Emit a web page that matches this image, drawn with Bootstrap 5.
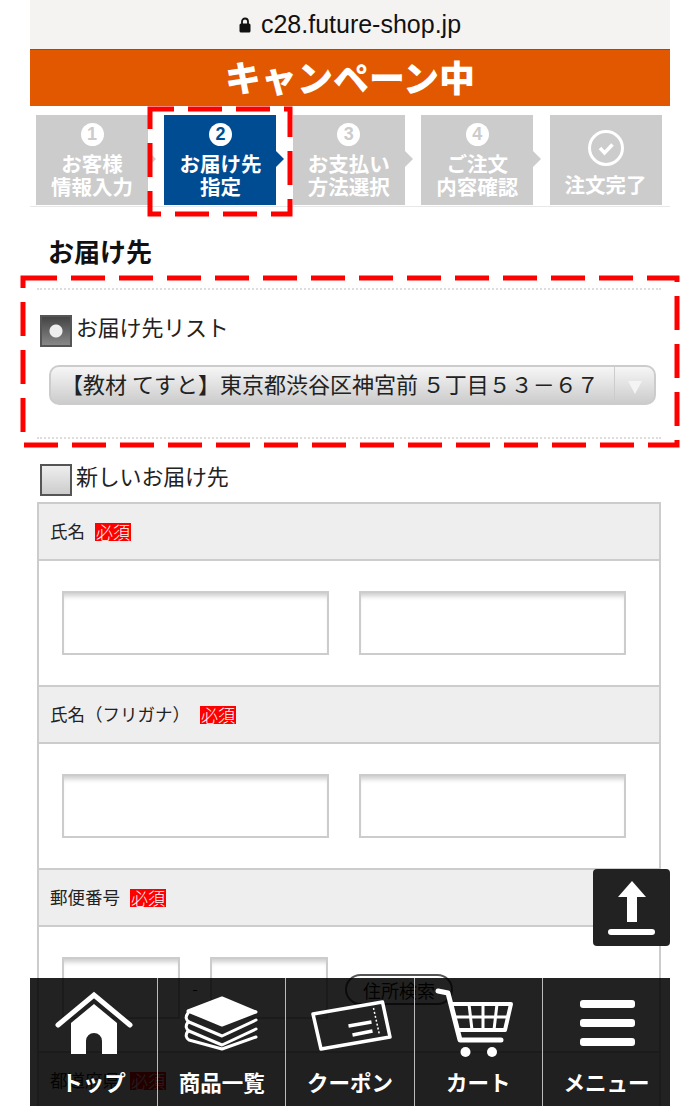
<!DOCTYPE html>
<html lang="ja">
<head>
    <meta charset="UTF-8">
    <meta name="viewport" content="width=device-width, initial-scale=1.0">
    <title>お届け先</title>
    <link rel="stylesheet" href="https://cdn.jsdelivr.net/npm/bootstrap@5.3.0/dist/css/bootstrap.min.css">
    <style>
        body {
            font-family: "Noto Sans CJK JP", "Liberation Sans", sans-serif;
            background: #fff;
            color: #222;
        }
        .shot { width: 700px; height: 1106px; overflow: hidden; position: relative; padding: 0 30px; }
        .addr-bar { height: 50px; background: #f5f3f1; border-bottom: 1px solid #a04a10; font-family: "Liberation Sans", sans-serif; font-size: 25px; color: #111; gap: 10px; }
        .camp-bar { height: 56px; background: #e25800; color: #fff; font-size: 36px; font-weight: 900; line-height: 1; padding-bottom: 4px; }
        .step-row { height: 101px; padding: 9px 0 0 6px; border-bottom: 1px solid #e8e8e8; align-items: flex-start; gap: 16.4px; }
        .step-box { width: 112px; height: 90px; background: #ccc; color: #fff; font-weight: 700; font-size: 20.5px; line-height: 23px; position: relative; padding-top: 8px; white-space: nowrap; }
        .step-box.is-current { background: #004c92; }
        .step-box.has-arrow::after { content: ""; position: absolute; left: 100%; top: 36px; border-left: 8px solid #ccc; border-top: 8px solid transparent; border-bottom: 8px solid transparent; }
        .step-box.is-current::after { border-left-color: #004c92; }
        .step-num { width: 23px; height: 23px; border-radius: 50%; background: #fff; color: #ccc; font-size: 18px; line-height: 23px; font-family: "Liberation Sans", sans-serif; margin-bottom: 6px; }
        .is-current .step-num { color: #004c92; }
        .step-done { height: 36px; margin: 7px 0 7px; }
        .page-title { font-size: 26px; font-weight: 700; line-height: 34px; padding: 27px 0 8px 18px; color: #111; margin: 0; }
        .list-block { margin: 12px 9px 0 7px; padding: 25px 2px 32px 3px; border-top: 2px dotted #ddd; border-bottom: 2px dotted #ddd; }
        .addr-radio { appearance: none; width: 32px; height: 32px; flex: none; border: 2px solid #555; background: linear-gradient(#eee, #ccc); }
        .addr-radio:checked { background: radial-gradient(circle at 50% 50%, #eee 0 6px, transparent 7px), linear-gradient(#444, #888); }
        .radio-text { font-size: 22px; line-height: 32px; color: #222; margin: -11px 0 0 4px; letter-spacing: -.2px; }
        .select-wrap { height: 40px; margin: 18px 3px 0 9px; border: 2px solid #ccc; border-radius: 10px; background: linear-gradient(#f6f6f6, #ccc); overflow: hidden; }
        .addr-select { appearance: none; border: 0; background: transparent; width: 100%; height: 100%; padding: 0 0 4px 10px; font-size: 22px; font-family: "Noto Sans CJK JP", sans-serif; color: #222; }
        .select-arrow { width: 40px; flex: none; border-left: 1px solid #ccc; }
        .select-arrow::before { content: ""; border-top: 13px solid #f4f4f4; border-left: 7px solid transparent; border-right: 7px solid transparent; margin-top: 4px; }
        .new-radio-row { margin: 25px 0 6px 10px; }
        .form-sheet { margin: 0 9px 0 7px; border: 2px solid #ccc; border-bottom: 0; }
        .sheet-head { height: 57px; background: #eee; border-bottom: 2px solid #ccc; padding-left: 11px; font-size: 17.5px; color: #222; }
        .sheet-body { height: 126px; border-bottom: 2px solid #ccc; padding: 30px 0 0 23px; gap: 30px; align-items: flex-start; }
        .req-tag { background: #f00; color: #fff; font-size: 17px; line-height: 18px; height: 18px; width: 36px; margin-left: 10px; text-align: center; white-space: nowrap; font-weight: 300; }
        .sheet-input { width: 267px; height: 64px; flex: none; border: 2px solid #ccc; border-radius: 0; box-shadow: inset 0 6px 5px -3px #ccc; }
        .sheet-input.is-short { width: 118px; height: 62px; }
        .post-dash { width: 30px; text-align: center; font-size: 16px; line-height: 62px; }
        .addr-btn { width: 108px; height: 31px; padding: 0; margin: 17px 0 0 17px; border: 2px solid #555; border-radius: 16px; background: #fff; color: #111; font-size: 18px; line-height: 26px; }
        .red-frame { position: absolute; fill: none; stroke: #f00; stroke-width: 5; stroke-dasharray: 34 14; pointer-events: none; }
        .frame-steps { left: 147px; top: 106px; stroke-dashoffset: 10; }
        .frame-list { left: 20px; top: 275px; }
        .go-top { position: absolute; left: 593px; top: 869px; width: 77px; height: 77px; background: #222; border-radius: 4px; }
        .foot-nav { position: absolute; left: 30px; top: 978px; width: 640px; height: 128px; background: rgba(0, 0, 0, .865); }
        .foot-cell { flex: 1 1 0; color: #fff; border-left: 1px solid #bbb; font-size: 21.5px; font-weight: 700; line-height: 28px; padding-top: 10px; text-align: center; white-space: nowrap; }
        .foot-cell:first-child { border-left: 0; }
        .foot-cell svg { display: block; margin: 0 auto 10px; }
    </style>
</head>
<body>
<div class="shot">
    <div class="addr-bar d-flex align-items-center justify-content-center">
        <svg width="12" height="16" viewBox="0 0 12 16"><path d="M3 7V4.500a3 3 0 0 1 6 0V7" fill="none" stroke="#111" stroke-width="1.800"/><rect x="0.500" y="6.500" width="11" height="9" rx="1.500" fill="#111"/></svg>
        <span>c28.future-shop.jp</span>
    </div>
    <div class="camp-bar d-flex align-items-center justify-content-center">キャンペーン中</div>

    <div class="step-row d-flex">
        <div class="step-box has-arrow text-center"><div class="step-num mx-auto">1</div><div>お客様<br>情報入力</div></div>
        <div class="step-box has-arrow is-current text-center"><div class="step-num mx-auto">2</div><div>お届け先<br>指定</div></div>
        <div class="step-box has-arrow text-center"><div class="step-num mx-auto">3</div><div>お支払い<br>方法選択</div></div>
        <div class="step-box has-arrow text-center"><div class="step-num mx-auto">4</div><div>ご注文<br>内容確認</div></div>
        <div class="step-box text-center">
            <svg class="step-done d-block mx-auto" width="36" height="36" viewBox="0 0 36 36" fill="none" stroke="#fff"><circle cx="18" cy="18" r="16.500" stroke-width="3"/><path d="M12 18l4.500 5 8-8.500" stroke-width="3.500"/></svg>
            <div>注文完了</div>
        </div>
    </div>

    <h2 class="page-title">お届け先</h2>

    <div class="list-block">
        <label class="d-flex align-items-center">
            <input class="addr-radio" type="radio" name="dest" checked>
            <span class="radio-text">お届け先リスト</span>
        </label>
        <div class="select-wrap d-flex">
            <select class="addr-select flex-grow-1">
                <option>【教材 てすと】東京都渋谷区神宮前 ５丁目５３－６７</option>
            </select>
            <span class="select-arrow d-flex align-items-center justify-content-center"></span>
        </div>
    </div>

    <label class="new-radio-row d-flex align-items-center">
        <input class="addr-radio" type="radio" name="dest">
        <span class="radio-text">新しいお届け先</span>
    </label>

    <div class="form-sheet">
        <div class="sheet-head d-flex align-items-center">氏名<span class="req-tag">必須</span></div>
        <div class="sheet-body d-flex">
            <input class="form-control sheet-input" type="text">
            <input class="form-control sheet-input" type="text">
        </div>
        <div class="sheet-head d-flex align-items-center">氏名（フリガナ）<span class="req-tag">必須</span></div>
        <div class="sheet-body d-flex">
            <input class="form-control sheet-input" type="text">
            <input class="form-control sheet-input" type="text">
        </div>
        <div class="sheet-head d-flex align-items-center">郵便番号<span class="req-tag">必須</span></div>
        <div class="sheet-body d-flex gap-0">
            <input class="form-control sheet-input is-short" type="text">
            <span class="post-dash">-</span>
            <input class="form-control sheet-input is-short" type="text">
            <button class="btn addr-btn" type="button">住所検索</button>
        </div>
        <div class="sheet-head d-flex align-items-center">都道府県<span class="req-tag">必須</span></div>
    </div>

    <!-- red dashed frames over the content -->
    <svg class="red-frame frame-steps" width="146" height="111"><rect x="3" y="3" width="140" height="105"/></svg>
    <svg class="red-frame frame-list" width="660" height="173"><rect x="3" y="3" width="654" height="167"/></svg>

    <div class="go-top">
        <svg width="77" height="77" viewBox="0 0 77 77" fill="#fff"><path d="M39 12l14 16h-9v25h-10V28h-9z"/><rect x="15" y="60" width="47" height="6" rx="3"/></svg>
    </div>

    <nav class="foot-nav d-flex">
        <div class="foot-cell">
            <svg width="100" height="70" viewBox="0 0 100 70" fill="#fff"><path d="M14 37L50 7l36 30" fill="none" stroke="#fff" stroke-width="5" stroke-linecap="round"/><path d="M50 16L27 35v31h15V53a8 8 0 0 1 16 0v13h15V35z"/></svg>
            <div>トップ</div>
        </div>
        <div class="foot-cell">
            <svg width="100" height="70" viewBox="0 0 100 70" fill="none" stroke="#fff" stroke-width="3" stroke-linejoin="round" stroke-linecap="round"><path d="M50 10l34 14-34 13-34-14z" fill="#fff"/><path d="M16 25c-3 4-2 7 1 9l33 14 34-16"/><path d="M16 34c-3 4-2 7 1 9l33 14 34-16"/><path d="M16 43c-3 4-2 7 1 9l33 9 34-12"/></svg>
            <div>商品一覧</div>
        </div>
        <div class="foot-cell">
            <svg width="100" height="70" viewBox="0 0 100 70" fill="none" stroke="#fff"><path d="M13 26l69.500-12 7.500 35-69 12z" stroke-width="3.500" stroke-linejoin="round"/><path d="M73.500 20l6 27" stroke-width="1.500" stroke-dasharray="2 2"/><path d="M48.500 38l23-4M52.500 47l20-4" stroke-width="3.500"/></svg>
            <div>クーポン</div>
        </div>
        <div class="foot-cell">
            <svg width="100" height="70" viewBox="0 0 100 70" fill="none" stroke="#fff"><path d="M10 3l10 2 12 47h41" stroke-width="5" stroke-linecap="round" stroke-linejoin="round"/><path d="M23 16h60l-6 26H31" stroke-width="4" stroke-linejoin="round"/><path d="M41 16l3 26M55 16v26M69 16l-3 26M26 29h54" stroke-width="3"/><circle cx="37.500" cy="64" r="5" fill="#fff" stroke="none"/><circle cx="64" cy="64" r="5" fill="#fff" stroke="none"/></svg>
            <div>カート</div>
        </div>
        <div class="foot-cell">
            <svg width="100" height="70" viewBox="0 0 100 70" fill="#fff"><rect x="24" y="12" width="55" height="8" rx="3"/><rect x="24" y="31" width="55" height="8" rx="3"/><rect x="24" y="50" width="55" height="8" rx="3"/></svg>
            <div>メニュー</div>
        </div>
    </nav>
</div>
<script src="https://cdn.jsdelivr.net/npm/bootstrap@5.3.0/dist/js/bootstrap.bundle.min.js"></script>
</body>
</html>
